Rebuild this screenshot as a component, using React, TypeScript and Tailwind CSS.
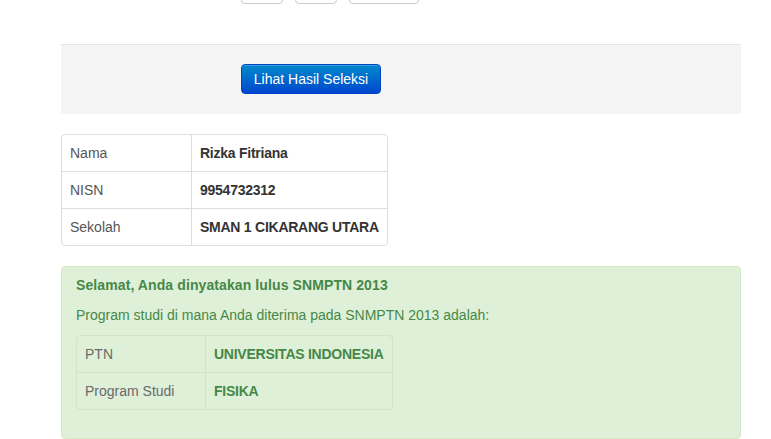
const siswa = [
  { label: "Nama", value: "Rizka Fitriana" },
  { label: "NISN", value: "9954732312" },
  { label: "Sekolah", value: "SMAN 1 CIKARANG UTARA" },
];

const hasil = [
  { label: "PTN", value: "UNIVERSITAS INDONESIA" },
  { label: "Program Studi", value: "FISIKA" },
];

export default function App() {
  return (
    <div
      className="min-h-[439px] bg-white pl-[61px] pr-[30px] text-[14px] leading-5 text-[#333]"
      style={{ fontFamily: '"Liberation Sans", Arial, sans-serif' }}
    >
      <div className="w-[680px]">
        {/* select boxes cut off at the top */}
        <div className="ml-[180px] flex h-[4px] items-end gap-3 overflow-hidden">
          <div className="h-[30px] w-[42px] shrink-0 rounded-[4px] border border-[#cccccc]" />
          <div className="h-[30px] w-[42px] shrink-0 rounded-[4px] border border-[#cccccc]" />
          <div className="h-[30px] w-[70px] shrink-0 rounded-[4px] border border-[#cccccc]" />
        </div>

        <div className="mt-[40px] border-t border-[#e5e5e5] bg-[#f5f5f5] pb-5 pl-[180px] pt-[19px]">
          <button className="h-[30px] w-[140px] rounded-[4px] border border-[#0044cc] bg-gradient-to-b from-[#0088cc] to-[#0044cc] text-[14px] text-white shadow-[inset_0_1px_0_rgba(255,255,255,0.2)]">
            Lihat Hasil Seleksi
          </button>
        </div>

        <table className="mt-5 border-separate border-spacing-0 whitespace-nowrap rounded-[4px] border border-[#dddddd]">
          <tbody>
            {siswa.map((row, i) => (
              <tr key={row.label}>
                <td
                  className={`w-[129px] min-w-[129px] px-2 py-2 align-middle font-light text-[#555] ${
                    i > 0 ? "border-t border-[#dddddd]" : ""
                  }`}
                >
                  {row.label}
                </td>
                <td
                  className={`border-l border-[#dddddd] px-2 py-2 align-middle font-bold tracking-[-0.25px] text-[#333] ${
                    i > 0 ? "border-t" : ""
                  }`}
                >
                  {row.value}
                </td>
              </tr>
            ))}
          </tbody>
        </table>

        <div className="mb-[1px] mt-5 h-[173px] rounded-[4px] border border-[#d6e9c6] bg-[#dff0d8] px-[14px] pt-2 text-[#468847]">
          <h4 className="font-bold tracking-[0.1px]">Selamat, Anda dinyatakan lulus SNMPTN 2013</h4>
          <p className="mt-[10px] font-light">Program studi di mana Anda diterima pada SNMPTN 2013 adalah:</p>
          <table className="mt-[10px] border-separate border-spacing-0 whitespace-nowrap rounded-[4px] border border-[#d3e2cb]">
            <tbody>
              {hasil.map((row, i) => (
                <tr key={row.label}>
                  <td
                    className={`w-[128px] min-w-[128px] px-2 py-2 align-middle font-light text-[#6a6a6a] ${
                      i > 0 ? "border-t border-[#d3e2cb]" : ""
                    }`}
                  >
                    {row.label}
                  </td>
                  <td
                    className={`border-l border-[#d3e2cb] px-2 py-2 align-middle font-bold tracking-[-0.25px] text-[#468847] ${
                      i > 0 ? "border-t" : ""
                    }`}
                  >
                    {row.value}
                  </td>
                </tr>
              ))}
            </tbody>
          </table>
        </div>
      </div>
    </div>
  );
}
